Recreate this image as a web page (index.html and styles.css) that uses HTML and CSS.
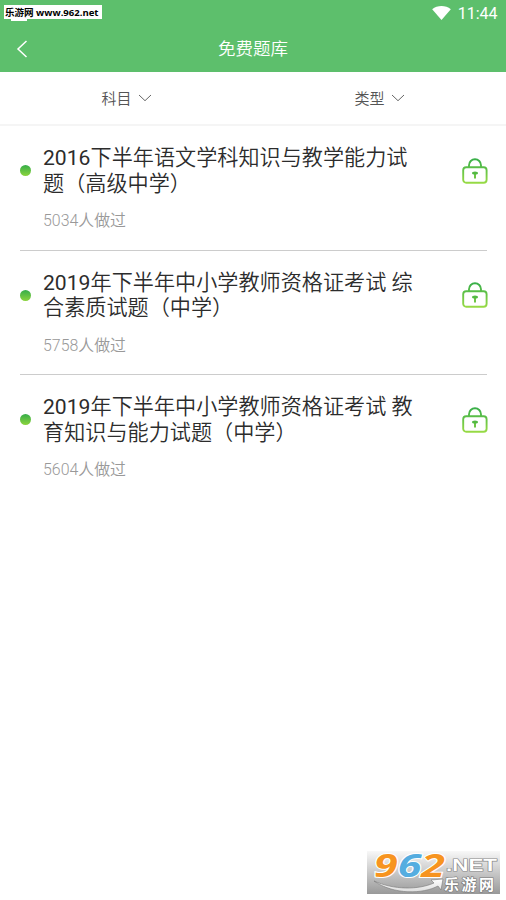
FILE: index.html
```html
<!DOCTYPE html>
<html lang="zh-CN">
<head>
<meta charset="utf-8">
<title>免费题库</title>
<link rel="stylesheet" href="styles.css">
</head>
<body>
<svg class="defs" width="0" height="0" aria-hidden="true">
  <defs>
    <linearGradient id="green" x1="0" y1="0" x2="0" y2="26" gradientUnits="userSpaceOnUse">
      <stop offset="0" stop-color="#35ad49"/><stop offset="1" stop-color="#9bdc45"/>
    </linearGradient>
    <symbol id="lock" viewBox="0 0 26 26">
      <g fill="none" stroke="url(#green)" stroke-width="1.9">
        <rect x="1.200" y="9.300" width="23.400" height="15.500" rx="3"/>
        <path d="M7 9V7.200a6 6 0 0 1 12 0V9"/>
      </g>
      <path d="M13 14v6.500" stroke="#6cc544" stroke-width="2"/>
      <ellipse cx="13" cy="15" rx="3" ry="1.600" fill="#54b944"/>
    </symbol>
  </defs>
</svg>
<header class="header">
  <div class="status">
    <span class="site">乐游网 www.962.net</span>
    <svg class="wifi" viewBox="0 0 20 15"><path d="M0 3.400C5.500-1.100 14.500-1.100 20 3.400L10 15z" fill="#fff"/></svg>
    <span class="time">11:44</span>
  </div>
  <div class="nav">
    <svg class="back" viewBox="0 0 12 18"><path d="M10.500 1L2 9l8.500 8" fill="none" stroke="#fff" stroke-width="1.500"/></svg>
    <h1 class="heading">免费题库</h1>
  </div>
</header>
<nav class="filters">
  <div class="filter">科目<svg class="chevron" viewBox="0 0 14 8"><path d="M1 1l6 5.700L13 1" fill="none" stroke="#666" stroke-width="1"/></svg></div>
  <div class="filter">类型<svg class="chevron" viewBox="0 0 14 8"><path d="M1 1l6 5.700L13 1" fill="none" stroke="#666" stroke-width="1"/></svg></div>
</nav>
<main class="list">
  <article class="item">
    <i class="dot"></i>
    <div class="body"><h2 class="title"><span class="year">2016</span>下半年语文学科知识与教学能力试<br>题（高级中学）</h2><p class="meta">5034人做过</p></div>
    <svg class="lock"><use href="#lock"/></svg>
  </article>
  <article class="item">
    <i class="dot"></i>
    <div class="body"><h2 class="title"><span class="year">2019</span>年下半年中小学教师资格证考试 综<br>合素质试题（中学）</h2><p class="meta">5758人做过</p></div>
    <svg class="lock"><use href="#lock"/></svg>
  </article>
  <article class="item">
    <i class="dot"></i>
    <div class="body"><h2 class="title"><span class="year">2019</span>年下半年中小学教师资格证考试 教<br>育知识与能力试题（中学）</h2><p class="meta">5604人做过</p></div>
    <svg class="lock"><use href="#lock"/></svg>
  </article>
</main>
<div class="watermark">
  <svg class="mark" viewBox="0 0 133 43">
    <defs><linearGradient id="silver" x1="0" y1="0" x2="0" y2="1"><stop offset="0" stop-color="#fff"/><stop offset="1" stop-color="#ddd"/></linearGradient></defs>
    <path d="M7 30C27 44 56 43 71 35l3 4 2-11-12 1 3 3C51 39 27 39 7 30z" fill="url(#silver)" stroke="#777" stroke-width=".6"/>
    <text class="digits" x="7" y="26" textLength="71" lengthAdjust="spacingAndGlyphs"><tspan class="orange">9</tspan><tspan class="blue">6</tspan><tspan class="orange">2</tspan></text>
    <text class="net" x="79" y="20" textLength="51" lengthAdjust="spacingAndGlyphs">.NET</text>
    <text class="cn" x="77" y="39" textLength="50">乐游网</text>
  </svg>
</div>
</body>
</html>
```
FILE: styles.css
```css
* { box-sizing: border-box; }
body {
  margin: 0;
  height: 900px;
  position: relative;
  overflow: hidden;
  background: #fff;
  font-family: Roboto, "Noto Sans CJK SC", sans-serif;
}
.defs { position: absolute; }
h1, h2, p { margin: 0; font-weight: 350; }
.header { height: 72px; background: #5dbf6c; color: #fff; }
.status { height: 26px; display: flex; align-items: center; padding: 0 8.500px 0 4px; }
.site {
  position: relative;
  width: 98px;
  height: 14px;
  margin-top: -2px;
  margin-right: auto;
  padding-left: 1px;
  background: #fff;
  color: #000;
  font: 700 9.550px/15px "Open Sans", "Noto Sans CJK SC", sans-serif;
  white-space: nowrap;
}
.site::after {
  content: "";
  position: absolute;
  left: 7px;
  top: 14px;
  width: 16px;
  height: 2px;
  background: #fff;
}
.wifi { width: 19px; height: 14px; margin-right: 7px; margin-top: -1px; }
.time { font-size: 16px; line-height: 26px; padding-top: 2px; }
.nav { height: 46px; display: grid; grid-template-columns: 40px 1fr 40px; align-items: center; }
.back { width: 12px; height: 18px; margin-left: 16px; }
.heading { font-size: 17.500px; line-height: 26px; text-align: center; margin-top: -1px; }
.filters {
  height: 54px;
  display: grid;
  grid-template-columns: 1fr 1fr;
  border-bottom: 2px solid #f5f5f5;
}
.filter {
  display: flex;
  align-items: center;
  justify-content: center;
  gap: 6px;
  padding-bottom: 1px;
  font-size: 15px;
  font-weight: 350;
  color: #555;
}
.chevron { width: 14px; height: 8px; }
.list { padding: 0 19px 0 20px; }
.item {
  height: 124.500px;
  padding-top: 19.400px;
  display: flex;
  border-bottom: 1.500px solid #ccc;
}
.item:last-child { border-bottom: 0; }
.dot {
  width: 11px;
  height: 11px;
  margin: 20px 12px 0 0;
  border-radius: 50%;
  background: linear-gradient(#35ad49, #8cd43d);
}
.body { flex: 1; }
.title { font-size: 21.130px; line-height: 25.300px; color: #2c2c2c; white-space: nowrap; }
.year { font-weight: 400; }
.meta { font-size: 15.900px; line-height: 20px; margin-top: 15.500px; color: #999; }
.lock { width: 26px; height: 26px; margin-top: 12.400px; margin-right: -1px; }
.watermark {
  position: absolute;
  left: 367px;
  top: 851px;
  width: 133px;
  height: 43px;
  background: linear-gradient(#f8f8f8, #999);
}
.mark { display: block; width: 133px; height: 43px; overflow: visible; }
.digits { font: italic 700 32px "Open Sans", sans-serif; stroke: #fff; stroke-width: 2px; paint-order: stroke; }
.orange { fill: #f79420; }
.blue { fill: #55ade0; }
.net { font: 700 17px "Liberation Sans", sans-serif; fill: #fff; stroke: #888; stroke-width: 1.200px; paint-order: stroke; }
.cn { font: 700 15px "Noto Sans CJK SC", sans-serif; fill: #fff; stroke: #777; stroke-width: 1.200px; paint-order: stroke; }
```
